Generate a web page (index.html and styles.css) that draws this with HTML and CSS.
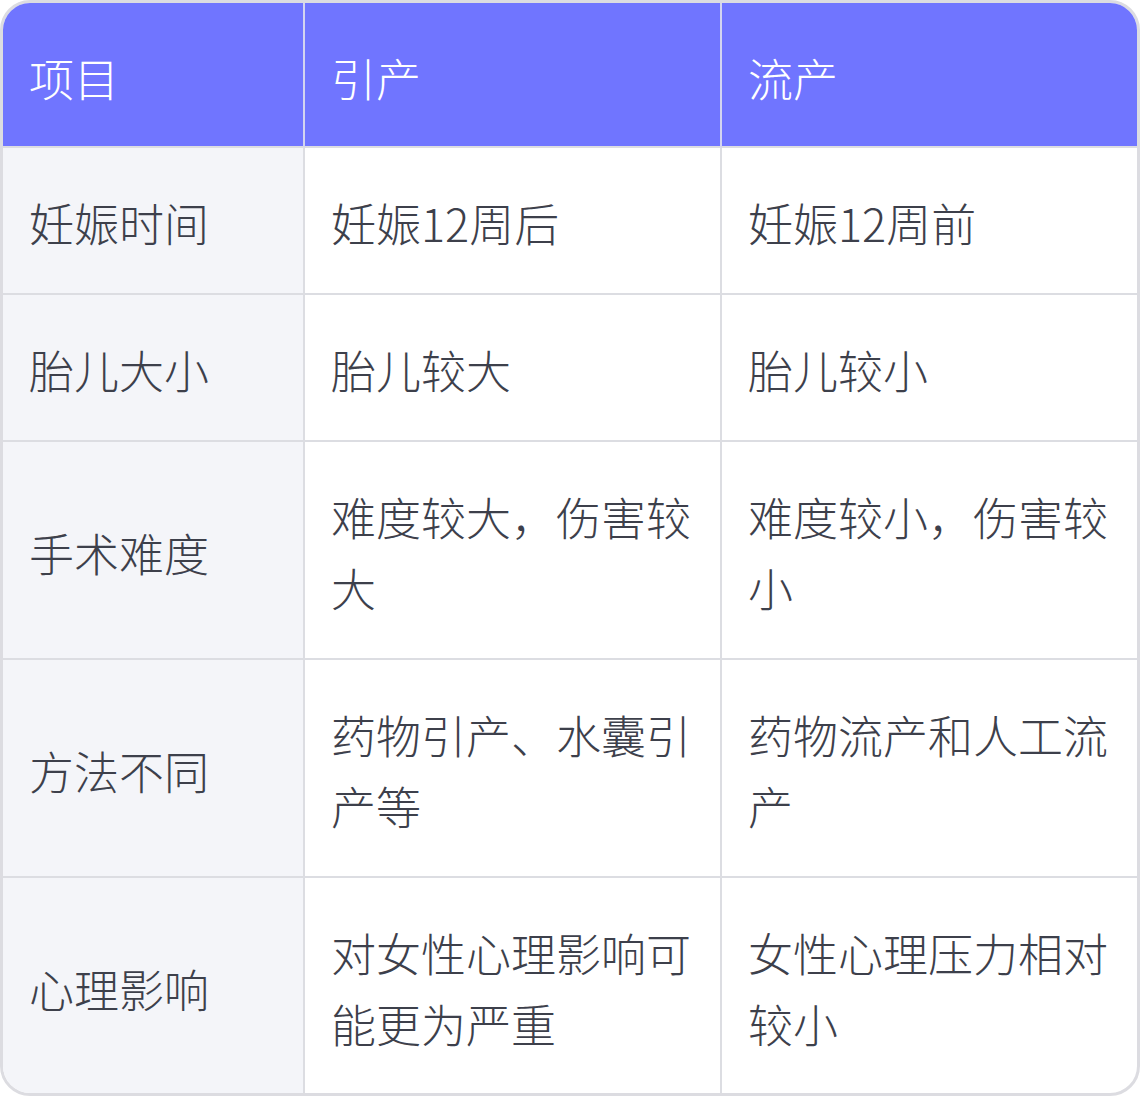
FILE: index.html
```html
<!DOCTYPE html>
<html lang="zh-CN">
<head>
<meta charset="utf-8">
<link rel="stylesheet" href="styles.css">
</head>
<body>
<div class="wrap">
<table class="cmp">
<thead>
<tr><th class="c1">项目</th><th class="c2">引产</th><th class="c3">流产</th></tr>
</thead>
<tbody>
<tr><td class="c1">妊娠时间</td><td class="c2">妊娠12周后</td><td class="c3">妊娠12周前</td></tr>
<tr><td class="c1">胎儿大小</td><td class="c2">胎儿较大</td><td class="c3">胎儿较小</td></tr>
<tr><td class="c1">手术难度</td><td class="c2">难度较大，伤害较大</td><td class="c3">难度较小，伤害较小</td></tr>
<tr><td class="c1">方法不同</td><td class="c2">药物引产、水囊引产等</td><td class="c3">药物流产和人工流产</td></tr>
<tr><td class="c1">心理影响</td><td class="c2">对女性心理影响可能更为严重</td><td class="c3">女性心理压力相对较小</td></tr>
</tbody>
</table>
</div>
</body>
</html>
```
FILE: styles.css
```css
html, body {
  margin: 0;
  padding: 0;
  background: #ffffff;
}
.wrap {
  width: 1140px;
  height: 1096px;
  box-sizing: border-box;
  border: 3px solid #dcdce1;
  border-radius: 30px;
  overflow: hidden;
  background: #ffffff;
}
.cmp {
  width: 1134px;
  border-collapse: separate;
  border-spacing: 0;
  table-layout: fixed;
  font-family: "Noto Sans CJK SC", "Noto Sans", sans-serif;
  font-size: 45px;
  line-height: 71px;
  color: #3d404b;
}
.cmp th, .cmp td {
  text-align: left;
  vertical-align: middle;
  font-weight: 300;
  padding: 39px 20px 35px 26px;
  border-right: 2px solid #dcdde2;
  border-bottom: 2px solid #dcdde2;
}
.cmp th {
  background: #7075ff;
  color: #ffffff;
  padding-top: 39px;
  padding-bottom: 33px;
  border-right-color: #d3d4f0;
}
.cmp .c1 { width: 302px; box-sizing: border-box; }
.cmp .c2 { width: 417px; box-sizing: border-box; }
.cmp .c3 { box-sizing: border-box; border-right: none; }
.cmp td.c1 { background: #f4f5f9; }
.cmp tbody tr:last-child td { border-bottom: none; }
```
